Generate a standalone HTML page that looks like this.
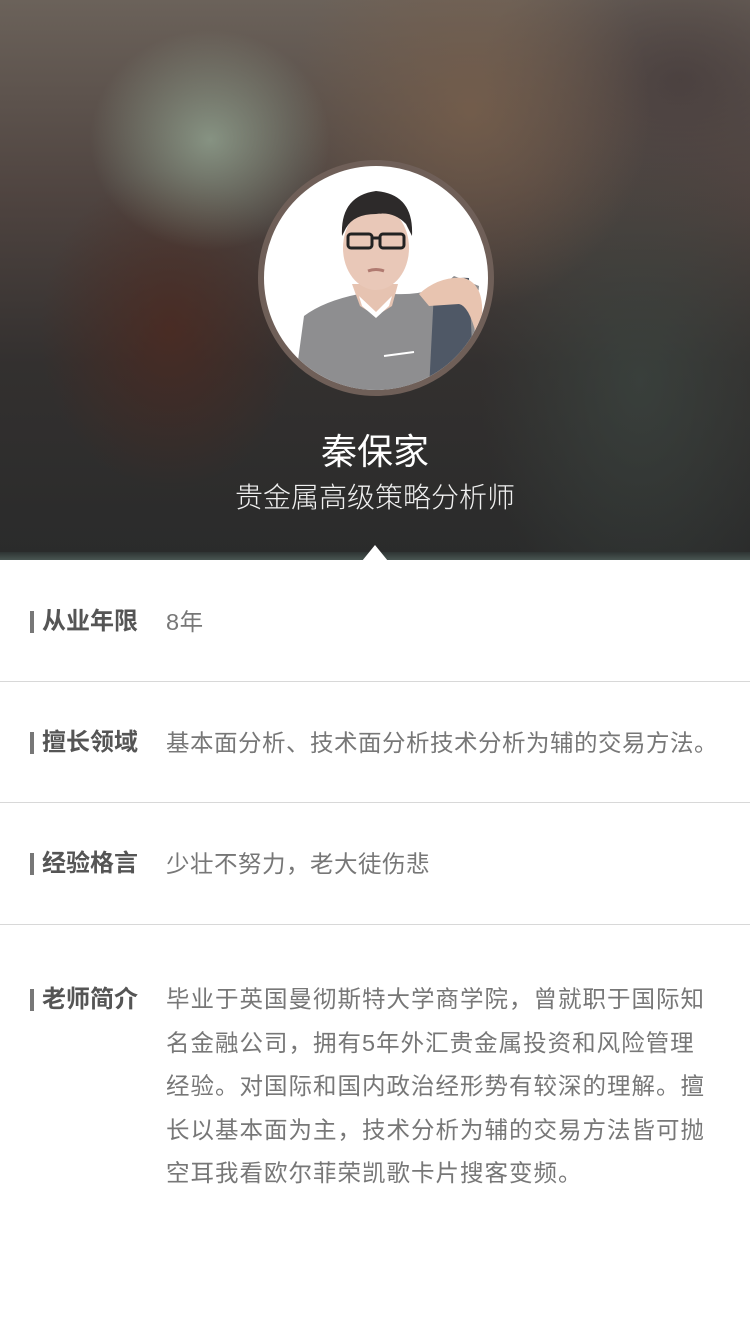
<!DOCTYPE html>
<html><head><meta charset="utf-8">
<style>
*{margin:0;padding:0;box-sizing:border-box}
body{width:750px;height:1334px;background:#fff;font-family:"Liberation Sans","Noto Sans CJK SC",sans-serif;overflow:hidden;position:relative}
.hdr{position:absolute;left:0;top:0;width:750px;height:560px;overflow:hidden;
background:
radial-gradient(ellipse 120px 110px at 210px 140px,rgba(150,170,150,.75),rgba(150,170,150,0) 100%),
radial-gradient(ellipse 180px 200px at 470px 110px,rgba(120,95,75,.8),rgba(120,95,75,0) 100%),
radial-gradient(ellipse 130px 160px at 170px 330px,rgba(80,40,30,.7),rgba(80,40,30,0) 100%),
radial-gradient(ellipse 160px 260px at 640px 380px,rgba(60,70,65,.7),rgba(60,70,65,0) 100%),
radial-gradient(ellipse 200px 150px at 680px 80px,rgba(70,60,60,.8),rgba(70,60,60,0) 100%),
linear-gradient(180deg,#6b625a 0%,#4f4440 35%,#33302f 65%,#2a2b2b 100%);}
.hdr:after{content:"";position:absolute;left:0;right:0;bottom:0;height:8px;background:linear-gradient(#2e3433,#495552)}
.av{position:absolute;left:258px;top:160px;width:236px;height:236px;border-radius:50%;border:6px solid #6f5f58;background:#fff;overflow:hidden}
.name{position:absolute;left:0;width:750px;top:428px;text-align:center;color:#fff;font-size:36px;line-height:48px}
.title{position:absolute;left:0;width:750px;top:480px;text-align:center;color:#f0f0f0;font-size:28px;line-height:36px;font-weight:300}
.tri{position:absolute;left:362px;top:545px;width:0;height:0;border-left:13px solid transparent;border-right:13px solid transparent;border-bottom:16px solid #fff;z-index:2}
.row{position:absolute;left:0;width:750px;border-bottom:1px solid #d8d8d8}
.lab{position:absolute;left:30px;font-size:24px;font-weight:bold;color:#555;padding-left:12px;line-height:30px;white-space:nowrap}
.lab:before{content:"";position:absolute;left:0;top:4px;width:4px;height:22px;background:#777}
.val{position:absolute;left:166px;font-size:23.5px;color:#777;line-height:30px;white-space:nowrap;letter-spacing:0.5px}
.intro{position:absolute;left:166px;top:978px;width:580px;font-size:23.5px;color:#777;line-height:43.5px;white-space:nowrap;letter-spacing:1px}
</style></head><body>
<div class="hdr">
<div class="av">
<svg width="224" height="224" viewBox="0 0 224 224">
<path d="M30 224 L40 150 Q60 135 95 128 L112 140 L130 128 Q170 130 190 110 L215 120 L205 224 Z" fill="#8e8e90"/>
<path d="M165 224 L170 125 Q185 110 205 112 L210 224 Z" fill="#4f5866"/>
<path d="M155 128 Q175 110 200 112 Q220 118 218 150 L212 168 Q205 140 195 138 L165 140 Z" fill="#e8c4b0"/>
<path d="M88 118 L96 140 L112 150 L128 140 L134 118 Z" fill="#e6c3b1"/>
<path d="M95 130 L112 146 L128 130 L125 140 L112 152 L98 140 Z" fill="#fff"/>
<ellipse cx="112" cy="82" rx="33" ry="42" fill="#e9c8b8"/>
<path d="M78 70 Q76 30 112 25 Q150 28 148 70 L142 58 Q130 45 112 48 Q90 48 82 62 Z" fill="#2d2a2a"/>
<rect x="84" y="68" width="24" height="14" rx="3" fill="none" stroke="#222" stroke-width="3"/>
<rect x="116" y="68" width="24" height="14" rx="3" fill="none" stroke="#222" stroke-width="3"/>
<line x1="108" y1="72" x2="116" y2="72" stroke="#222" stroke-width="3"/>
<path d="M104 105 Q112 102 120 105" stroke="#b07a70" stroke-width="3" fill="none"/>
<line x1="120" y1="190" x2="150" y2="186" stroke="#fff" stroke-width="2"/>
</svg>
</div>
<div class="name">秦保家</div>
<div class="title">贵金属高级策略分析师</div>
</div>
<div class="tri"></div>
<div class="row" style="top:560px;height:122px"><div class="lab" style="top:47px">从业年限</div><div class="val" style="top:47px">8年</div></div>
<div class="row" style="top:682px;height:121px"><div class="lab" style="top:46px">擅长领域</div><div class="val" style="top:46px">基本面分析、技术面分析技术分析为辅的交易方法。</div></div>
<div class="row" style="top:803px;height:122px"><div class="lab" style="top:46px">经验格言</div><div class="val" style="top:46px">少壮不努力，老大徒伤悲</div></div>
<div class="lab" style="top:985px">老师简介</div>
<div class="intro">毕业于英国曼彻斯特大学商学院，曾就职于国际知<br>名金融公司，拥有5年外汇贵金属投资和风险管理<br>经验。对国际和国内政治经形势有较深的理解。擅<br>长以基本面为主，技术分析为辅的交易方法皆可抛<br>空耳我看欧尔菲荣凯歌卡片搜客变频。</div>
</body></html>
